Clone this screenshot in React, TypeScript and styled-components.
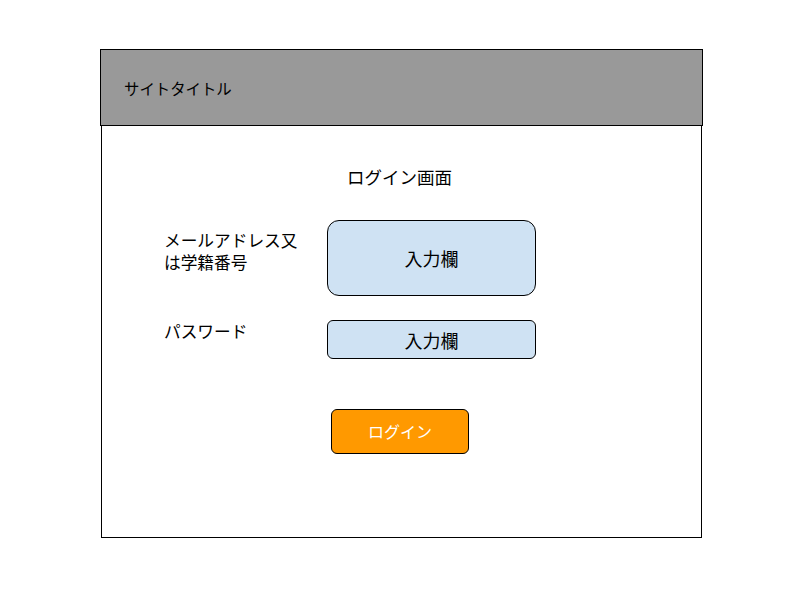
import React from "react";
import styled, { createGlobalStyle } from "styled-components";

const Global = createGlobalStyle`
  html, body { margin: 0; padding: 0; background: #fff; }
  body { font-family: "Liberation Sans", "Noto Sans CJK JP", sans-serif; color: #000; }
`;

const Frame = styled.div`
  margin: 49px 0 0 100px;
  width: 603px;
`;

const Header = styled.header`
  box-sizing: border-box;
  height: 77px;
  background: #999999;
  border: 1px solid #000;
  display: flex;
  align-items: center;
  padding: 0 0 0 23px;
  font-size: 15.4px;
`;

const Body = styled.main`
  box-sizing: border-box;
  margin: -1px 1px 0 1px;
  width: 601px;
  height: 413px;
  border: 1px solid #000;
  border-top: none;
  display: flex;
  flex-direction: column;
`;

const Title = styled.h1`
  margin: 42px 0 0 0;
  padding-right: 4px;
  font-size: 17.5px;
  font-weight: normal;
  text-align: center;
  line-height: 22px;
`;

const Form = styled.div`
  margin: 31px 0 0 62px;
  display: grid;
  grid-template-columns: 163px 209px;
  row-gap: 24px;
`;

const Label = styled.div<{ $top: number }>`
  font-size: 16.7px;
  line-height: 22px;
  padding-top: ${(p) => p.$top}px;
  white-space: nowrap;
`;

const Field = styled.div<{ $h: number; $r: number }>`
  box-sizing: border-box;
  height: ${(p) => p.$h}px;
  background: #cfe2f3;
  border: 1px solid #000;
  border-radius: ${(p) => p.$r}px;
  display: flex;
  align-items: center;
  justify-content: center;
  font-size: 18px;
`;

const ButtonRow = styled.div`
  margin: 50px 0 0 229px;
`;

const LoginButton = styled.button`
  box-sizing: border-box;
  width: 138px;
  height: 45px;
  background: #ff9900;
  border: 1px solid #000;
  border-radius: 6px;
  color: #fff;
  font-family: inherit;
  font-size: 16px;
  padding: 0 0 2px 0;
`;

export default function App() {
  return (
    <>
      <Global />
      <Frame>
        <Header>サイトタイトル</Header>
        <Body>
          <Title>ログイン画面</Title>
          <Form>
            <Label $top={11}>
              メールアドレス又
              <br />
              は学籍番号
            </Label>
            <Field $h={76} $r={12}>入力欄</Field>
            <Label $top={2}>パスワード</Label>
            <Field $h={39} $r={6}>入力欄</Field>
          </Form>
          <ButtonRow>
            <LoginButton>ログイン</LoginButton>
          </ButtonRow>
        </Body>
      </Frame>
    </>
  );
}
